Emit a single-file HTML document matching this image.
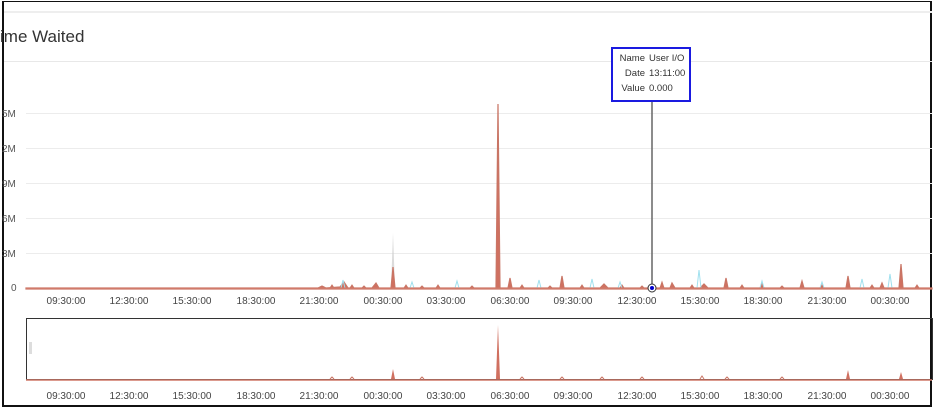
<!DOCTYPE html>
<html><head><style>
body{margin:0;width:935px;height:409px;overflow:hidden;background:#fff;font-family:"Liberation Sans",sans-serif;position:relative}
</style></head><body>
<div style="position:absolute;left:2px;top:1px;width:930px;height:406px;border-left:2px solid #111;border-top:1px solid #111;border-right:2px solid #111;border-bottom:2px solid #111;box-sizing:border-box"></div>
<div style="position:absolute;left:4px;top:11px;width:928px;height:2px;background:#eee"></div>
<div style="position:absolute;left:4px;top:61px;width:928px;height:1px;background:#e8e8e8"></div>
<div style="position:absolute;left:0;top:27px;font-size:17px;color:#333">ime Waited</div>
<svg width="935" height="409" style="position:absolute;left:0;top:0">
<g stroke="#ececec" stroke-width="1">
<line x1="26" x2="932" y1="113.5" y2="113.5"/><line x1="26" x2="932" y1="148.5" y2="148.5"/>
<line x1="26" x2="932" y1="183.5" y2="183.5"/><line x1="26" x2="932" y1="218.5" y2="218.5"/>
<line x1="26" x2="932" y1="253.5" y2="253.5"/>
</g>
<g font-family="Liberation Sans" font-size="10" fill="#555">
<text x="2" y="117">5M</text><text x="2" y="152">2M</text><text x="2" y="187">9M</text><text x="2" y="222">6M</text><text x="2" y="257">3M</text><text x="11" y="291">0</text>
</g>
<path d="M391 288 L393 233 L395 288Z" fill="#ccc" opacity=".7"/>
<path id="noise" d="M330 288 L332 285 L334 288 L350 288 L352 285 L354 288 L362 288 L364 286 L366 288 L404 288 L406 285 L408 288 L420 288 L422 286 L424 288 L436 288 L438 285 L440 288 L470 288 L472 286 L474 288 L520 288 L522 285 L524 288 L548 288 L550 286 L552 288 L580 288 L582 285 L584 288 L620 288 L622 285 L624 288 L640 288 L642 286 L644 288 L660 288 L662 282 L664 288 L690 288 L692 285 L694 288 L740 288 L742 285 L744 288 L780 288 L782 286 L784 288 L820 288 L822 285 L824 288 L870 288 L872 285 L874 288 L915 288 L917 285 L919 288" fill="#d07060" stroke="#c97565"/>
<path d="M26 288 H318 L322 286 L326 288 L340 287 L344 282 L348 288 L372 288 L376 283 L379 288 L391 288 L393 267 L395 288 L496 288 L498 104 L500 288 L508 288 L510 278 L512 288 L560 288 L562 276 L564 288 L600 288 L604 284 L608 288 L670 288 L672 283 L675 288 L700 288 L704 284 L708 288 L724 288 L726 278 L728 288 L760 288 L762 284 L764 288 L800 288 L802 281 L804 288 L846 288 L848 276 L850 288 L880 288 L882 283 L884 288 L899 288 L901 264 L903 288 L932 288 V289 H26Z" fill="#d07060" stroke="#c97565" stroke-width="1.2"/>
<path d="M341 288 L343 280 L345 288 M455 288 L457 281 L459 288 M537 288 L539 280 L541 288 M697 288 L699 270 L701 288 M590 288 L592 279 L594 288 M888 288 L890 274 L892 288 M860 288 L862 279 L864 288 M410 288 L412 282 L414 288 M618 288 L620 282 L622 288 M760 288 L762 281 L764 288 M820 288 L822 282 L824 288" stroke="#9fe0ee" fill="none"/>
<line x1="26" x2="932" y1="288.5" y2="288.5" stroke="#d07a6a" stroke-width="2"/>
<line x1="652" x2="652" y1="100" y2="285" stroke="#666" stroke-width="1.5"/>
<circle cx="652" cy="288" r="4" fill="#fff" stroke="#333"/><circle cx="652" cy="288" r="2" fill="#00c"/>
<g font-family="Liberation Sans" font-size="10" fill="#444" text-anchor="middle">
<text x="66" y="304">09:30:00</text><text x="129" y="304">12:30:00</text><text x="192" y="304">15:30:00</text><text x="256" y="304">18:30:00</text><text x="319" y="304">21:30:00</text><text x="383" y="304">00:30:00</text><text x="446" y="304">03:30:00</text><text x="510" y="304">06:30:00</text><text x="573" y="304">09:30:00</text><text x="637" y="304">12:30:00</text><text x="700" y="304">15:30:00</text><text x="763" y="304">18:30:00</text><text x="827" y="304">21:30:00</text><text x="890" y="304">00:30:00</text>
<text x="66" y="399">09:30:00</text><text x="129" y="399">12:30:00</text><text x="192" y="399">15:30:00</text><text x="256" y="399">18:30:00</text><text x="319" y="399">21:30:00</text><text x="383" y="399">00:30:00</text><text x="446" y="399">03:30:00</text><text x="510" y="399">06:30:00</text><text x="573" y="399">09:30:00</text><text x="637" y="399">12:30:00</text><text x="700" y="399">15:30:00</text><text x="763" y="399">18:30:00</text><text x="827" y="399">21:30:00</text><text x="890" y="399">00:30:00</text>
</g>
<rect x="26.5" y="318.5" width="906" height="61" fill="none" stroke="#333"/>
<rect x="29" y="342" width="3" height="12" fill="#ddd"/>
<path d="M318 379 L391 379 L393 369 L395 379 L496 379 L498 325 L500 379 L846 379 L848 370 L850 379 L899 379 L901 372 L903 379Z" fill="#d07060"/>
<path d="M330 379 L332 377 L334 379 M350 379 L352 377 L354 379 M420 379 L422 377 L424 379 M520 379 L522 377 L524 379 M560 379 L562 377 L564 379 M600 379 L602 377 L604 379 M640 379 L642 377 L644 379 M700 379 L702 376 L704 379 M725 379 L727 377 L729 379 M780 379 L782 377 L784 379" stroke="#c97565" fill="none"/>
<line x1="26" x2="932" y1="380" y2="380" stroke="#d07a6a" stroke-width="1.5"/>
</svg>
<div style="position:absolute;left:611px;top:47px;width:76px;height:49px;border:2px solid #1a1ae0;background:#fff;font-size:9.5px;color:#333;line-height:15px;padding-top:2px;box-sizing:content-box">
<div style="display:flex"><span style="width:32px;text-align:right;margin-right:4px">Name</span><span>User I/O</span></div>
<div style="display:flex"><span style="width:32px;text-align:right;margin-right:4px">Date</span><span>13:11:00</span></div>
<div style="display:flex"><span style="width:32px;text-align:right;margin-right:4px">Value</span><span>0.000</span></div>
</div>
</body></html>
